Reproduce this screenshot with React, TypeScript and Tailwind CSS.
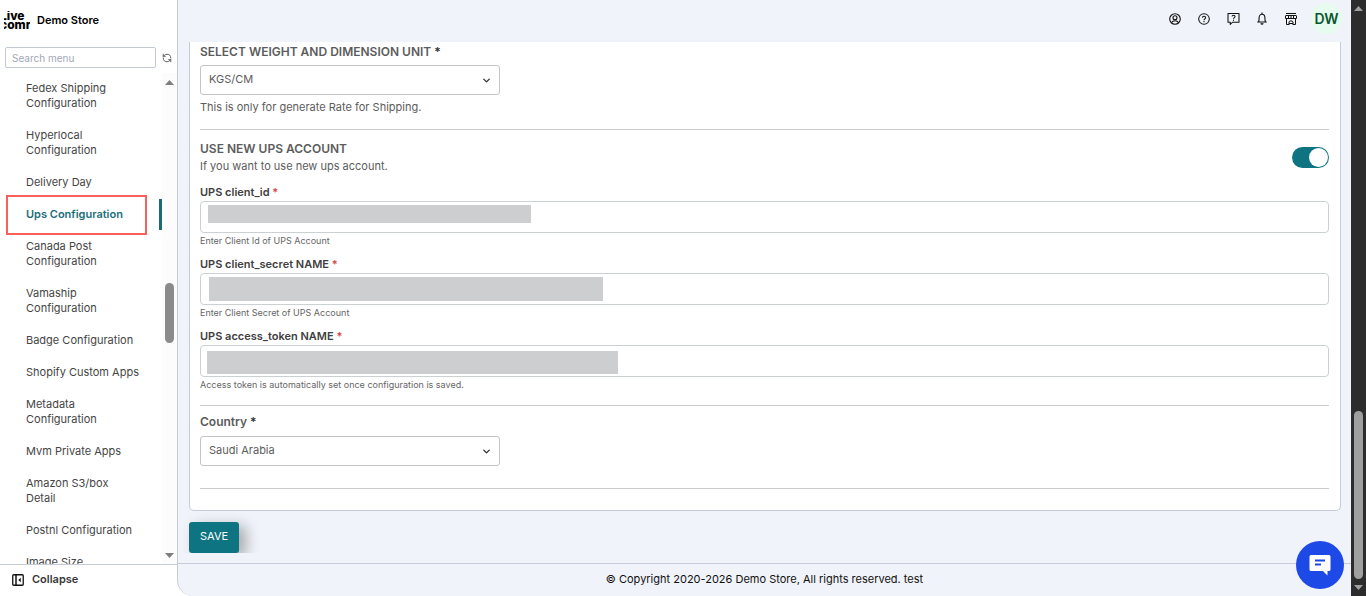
import { useState } from "react";
import { LuRefreshCcw } from "react-icons/lu";
import { ChevronDown } from "lucide-react";

const menuItems = [
  "Fedex Shipping Configuration",
  "Hyperlocal Configuration",
  "Delivery Day",
  "Ups Configuration",
  "Canada Post Configuration",
  "Vamaship Configuration",
  "Badge Configuration",
  "Shopify Custom Apps",
  "Metadata Configuration",
  "Mvm Private Apps",
  "Amazon S3/box Detail",
  "Postnl Configuration",
  "Image Size",
];

const upsFields = [
  { id: "client_id", label: "UPS client_id", hint: "Enter Client Id of UPS Account", mask: "left-2 top-1 w-[323px] h-[18px]" },
  { id: "client_secret", label: "UPS client_secret NAME", hint: "Enter Client Secret of UPS Account", mask: "left-[9px] top-1 w-[394px] h-6" },
  { id: "access_token", label: "UPS access_token NAME", hint: "Access token is automatically set once configuration is saved.", mask: "left-[7px] top-1.5 w-[411px] h-[23px]" },
];

function Arrow({ down = false, color }: { down?: boolean; color: string }) {
  return (
    <svg width="9" height="5" viewBox="0 0 9 5" fill={color} className="shrink-0" aria-hidden="true">
      <path d={down ? "M0 0h9L4.5 5z" : "M0 5h9L4.5 0z"} />
    </svg>
  );
}

function UserIcon() {
  return (
    <svg width="12" height="12" viewBox="0 0 24 24" fill="none" stroke="currentColor" strokeWidth="2.2">
      <circle cx="12" cy="12" r="10.6" />
      <circle cx="12" cy="9.5" r="4" />
      <path d="M4.8 19.5c1.6-2.6 4.2-4 7.2-4s5.6 1.4 7.2 4" />
    </svg>
  );
}

function HelpIcon() {
  return (
    <svg width="12" height="12" viewBox="0 0 24 24" fill="none" stroke="currentColor" strokeWidth="2.1">
      <circle cx="12" cy="12" r="10.6" />
      <path d="M8.8 9.6c0-1.8 1.4-3.1 3.2-3.1s3.2 1.2 3.2 2.9c0 2.3-3.2 2.5-3.2 5" />
      <path d="M12 16.2v2.4" />
    </svg>
  );
}

function ChatHelpIcon() {
  return (
    <svg width="13" height="13" viewBox="0 0 26 26" fill="none" stroke="currentColor" strokeWidth="2.1" className="shrink-0">
      <path d="M2 3h22v17.5H11L6.5 25v-4.5H2z" strokeLinejoin="round" />
      <path d="M10 8.8c.2-1.6 1.4-2.5 3-2.5 1.8 0 3.1 1.1 3.1 2.7 0 2.2-3.1 2.3-3.1 4.5" />
      <path d="M13 15.3v2.3" />
    </svg>
  );
}

function BellIcon() {
  return (
    <svg width="12" height="13" viewBox="0 0 24 26" fill="none" stroke="currentColor" strokeWidth="2.2">
      <path d="M2.5 20h19M5 20c1-1.5 1.2-3 1.2-8.5C6.2 7.5 8.700 4.500 12 4.500s5.800 3 5.800 7c0 5.500.2 7 1.200 8.500" />
      <path d="M12 1v3M9.500 22.800c.6 1 1.500 1.500 2.500 1.500s1.900-.5 2.500-1.500" />
    </svg>
  );
}

function StoreIcon() {
  return (
    <svg width="12" height="12" viewBox="0 0 12 12" fill="none" stroke="currentColor" className="shrink-0">
      <path d="M1 .5h10M1 2.5h10" />
      <path d="M.5 2.5v3h11v-3M3.5 3v3M8.500 3v3M6 3v2.500" />
      <path d="M1.500 6v5.500h2.500M10.500 6v5.500H8" />
      <path d="M4 12V9c0-1.500 4-1.500 4 0v3M4 10.500h4" />
    </svg>
  );
}

const topActions = [
  { label: "Account", icon: UserIcon },
  { label: "Help", icon: HelpIcon },
  { label: "Support chat", icon: ChatHelpIcon },
  { label: "Notifications", icon: BellIcon },
  { label: "Storefront", icon: StoreIcon },
];

function Sidebar() {
  const [active, setActive] = useState("Ups Configuration");

  return (
    <aside className="flex w-[177px] shrink-0 flex-col bg-white">
      <div className="flex h-10 shrink-0 items-center gap-[7px] pl-1">
        <div className="flex w-[26px] flex-col items-start overflow-hidden text-xs font-extrabold leading-[9px] text-black">
          <span className="-ml-1">Live</span>
          <span className="-ml-1">comr</span>
        </div>
        <span className="text-[11px] font-semibold text-black">Demo Store</span>
      </div>
      <div className="flex shrink-0 items-center gap-1.5 pl-[5px] pt-[7px]">
        <input type="text" aria-label="Search menu" placeholder="Search menu"
          className="h-[21px] w-[151px] rounded-xs border border-[#c3cad4] px-1.5 text-[10px] text-gray-700 outline-none placeholder:text-[#a3a8b8]" />
        <button aria-label="Refresh menu" className="text-[#444]">
          <LuRefreshCcw size={10} />
        </button>
      </div>
      <div className="flex min-h-0 flex-1 pt-[5px]">
        <nav className="flex min-w-0 flex-1 flex-col gap-px overflow-hidden">
          {menuItems.map((item) => (
            <div key={item} className="relative shrink-0">
              <a href="#" onClick={() => setActive(item)}
                className={`block py-2 pl-[26px] text-[11px] leading-[15px] ${
                  item === active ? "border-r-3 border-[#1c6a74] pr-4 font-semibold text-[#1c6f7a]" : "pr-[22px] text-[#454545]"
                }`}>
                {item}
              </a>
              {item === active && (
                <div className="pointer-events-none absolute -top-1 left-1.5 h-10 w-[141px] border-2 border-[#f9605c]" />
              )}
            </div>
          ))}
        </nav>
        <div className="flex w-[15px] shrink-0 flex-col items-center bg-[#fcfcfc] pb-1.5 pt-[7px]">
          <Arrow color="#7e7e7e" />
          <div className="flex-[198]" />
          <div className="h-[60px] w-[9px] rounded-full bg-[#8b8b8b]" />
          <div className="flex-[209]" />
          <Arrow down color="#7e7e7e" />
        </div>
      </div>
      <button className="flex h-8 shrink-0 items-center gap-2 border-t border-[#c5cbd8] pb-0.5 pl-3 text-[11px] font-semibold text-[#383838]">
        <svg width="12" height="12" viewBox="0 0 24 24" fill="none" stroke="#111" strokeWidth="2.6" aria-hidden="true">
          <rect x="1.5" y="1.5" width="21" height="21" rx="2" />
          <path d="M8 2v20" strokeWidth="3" />
          <path d="M17.5 7.5v9L12.5 12z" fill="#111" stroke="none" />
        </svg>
        Collapse
      </button>
    </aside>
  );
}

function SelectBox({ id, options }: { id: string; options: string[] }) {
  return (
    <div className="relative mt-1.5 w-[300px]">
      <select id={id}
        className="block h-[30px] w-full appearance-none rounded-[3px] border border-[#c4c4c4] bg-white pb-0.5 pl-2 pr-8 text-[11px] text-[#5c5c5c] outline-none">
        {options.map((o) => <option key={o}>{o}</option>)}
      </select>
      <ChevronDown size={11} strokeWidth={3} className="pointer-events-none absolute right-2 top-2.5 text-[#333]" />
    </div>
  );
}

function SettingsForm() {
  const [useNewAccount, setUseNewAccount] = useState(true);

  return (
    <section className="rounded-b-[5px] border border-t-0 border-[#c5cbd8] bg-white pb-[21px] pl-2.5 pr-[11px] pt-0.5">
      <label htmlFor="unit" className="-mb-px block text-xs font-semibold leading-4 text-[#5c5c5c]">
        SELECT WEIGHT AND DIMENSION UNIT <span className="text-[#333]">*</span>
      </label>
      <SelectBox id="unit" options={["KGS/CM", "LBS/IN"]} />
      <p className="mt-1 text-[11px] leading-4 text-[#5c5c5c]">This is only for generate Rate for Shipping.</p>
      <hr className="mt-3.5 border-[#c9cdcf]" />

      <div className="mt-[11px] flex items-center justify-between">
        <div>
          <h2 className="text-xs font-semibold leading-4 text-[#5c5c5c]">USE NEW UPS ACCOUNT</h2>
          <p className="mt-px text-[11px] leading-4 text-[#5c5c5c]">If you want to use new ups account.</p>
        </div>
        <label className="cursor-pointer">
          <input type="checkbox" role="switch" aria-label="Use new UPS account" className="peer sr-only"
            checked={useNewAccount} onChange={(e) => setUseNewAccount(e.target.checked)} />
          <span className="flex h-[21px] w-[37px] items-center rounded-full bg-gray-300 px-px peer-checked:justify-end peer-checked:bg-[#0f7482]">
            <span className="size-[19px] rounded-full bg-white" />
          </span>
        </label>
      </div>

      <div className="mt-2.5 flex flex-col gap-[7px]">
        {upsFields.map((field) => (
          <div key={field.id}>
            <label htmlFor={field.id} className="block text-[11px] font-semibold leading-4 text-[#404040]">
              {field.label} <span className="text-[#d64545]">*</span>
            </label>
            <div className="relative mt-px">
              <input id={field.id} type="text"
                className="block h-8 w-full rounded border border-[#cbd0d2] px-2 text-[11px] text-[#5c5c5c] outline-none" />
              <div className={`pointer-events-none absolute bg-[#cdced0] ${field.mask}`} />
            </div>
            <p className="text-[9px] leading-4 text-[#666]">{field.hint}</p>
          </div>
        ))}
      </div>
      <hr className="mt-3 border-[#c9cdcf]" />

      <label htmlFor="country" className="mt-2 block text-xs font-semibold leading-4 text-[#5c5c5c]">
        Country <span className="text-[#333]">*</span>
      </label>
      <SelectBox id="country" options={["Saudi Arabia", "United Arab Emirates"]} />
      <hr className="mt-[22px] border-[#c9cdcf]" />
    </section>
  );
}

export default function App() {
  return (
    <div className="flex h-screen overflow-hidden bg-white font-[Inter,sans-serif]">
      <Sidebar />
      <div className="flex min-w-0 flex-1 flex-col rounded-bl-2xl border-l border-[#c5cbd8] bg-[#f0f3f9]">
        <header className="flex h-[42px] shrink-0 items-start justify-end gap-3.5 pr-[9px] pt-[3px]">
          <div className="flex h-[31px] items-center gap-[17px] text-[#111]">
            {topActions.map((action) => (
              <button key={action.label} aria-label={action.label} className="flex w-3 justify-center">
                <action.icon />
              </button>
            ))}
          </div>
          <button aria-label="Profile" className="flex size-[31px] items-center justify-center rounded-full bg-[#e6fcee] text-sm font-semibold text-[#0d5532]">
            DW
          </button>
        </header>
        <main className="min-h-0 flex-1 overflow-hidden pl-[11px] pr-2.5">
          <SettingsForm />
          <div className="-ml-[11px] overflow-hidden pl-[11px] pt-[11px]">
            <button className="block h-[31px] rounded-[3px] bg-[#0f7482] px-[11px] pb-0.5 text-[11px] text-white shadow-[7px_4px_14px_rgba(0,0,0,0.3)]">
              SAVE
            </button>
          </div>
        </main>
        <footer className="flex h-[33px] shrink-0 items-center justify-center border-t border-[#c5cbd8] pb-0.5 text-[11px] text-[#111]">
          © Copyright 2020-2026 Demo Store, All rights reserved. test
        </footer>
      </div>
      <div className="flex w-[15px] shrink-0 flex-col items-center bg-[#2c2c2c] pb-1.5 pt-1.5">
        <Arrow color="#9f9f9f" />
        <div className="flex-1" />
        <div className="mb-1.5 h-[168px] w-[9px] rounded-full bg-[#9f9f9f]" />
        <Arrow down color="#9f9f9f" />
      </div>
      <button aria-label="Open chat" className="fixed bottom-[7px] right-[22px] flex size-12 items-center justify-center rounded-full bg-[#1d49e6]">
        <svg width="22" height="22" viewBox="0 0 22 22" aria-hidden="true">
          <path d="M2 1h18a1.5 1.5 0 0 1 1.5 1.5v13A1.5 1.5 0 0 1 20 17h-1.5v4.5L14 17H2A1.5 1.5 0 0 1 .5 15.5v-13A1.5 1.5 0 0 1 2 1z" fill="white" />
          <path d="M6 6.5h10M6 10.5h6" stroke="#1d49e6" strokeWidth="1.8" />
        </svg>
      </button>
    </div>
  );
}
